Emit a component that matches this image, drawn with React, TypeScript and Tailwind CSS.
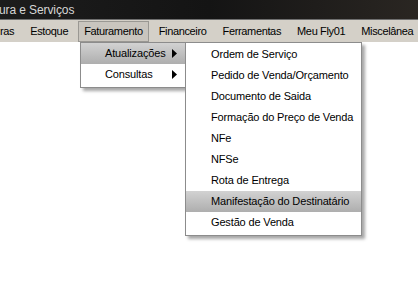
import { ReactNode } from 'react';

const font = { fontFamily: '"Liberation Sans", Arial, sans-serif' };

const topItems = ['ras', 'Estoque', 'Faturamento', 'Financeiro', 'Ferramentas', 'Meu Fly01', 'Miscelânea'];

const subItems = [
  'Ordem de Serviço',
  'Pedido de Venda/Orçamento',
  'Documento de Saida',
  'Formação do Preço de Venda',
  'NFe',
  'NFSe',
  'Rota de Entrega',
  'Manifestação do Destinatário',
  'Gestão de Venda',
];

function Arrow() {
  return (
    <svg width="5" height="9" viewBox="0 0 5 9" className="shrink-0">
      <path d="M0 0 L5 4.5 L0 9 Z" fill="#000" />
    </svg>
  );
}

function Row({ active, children }: { active?: boolean; children: ReactNode }) {
  return (
    <div
      className={`h-[21px] flex items-center whitespace-nowrap ${
        active ? 'bg-gradient-to-b from-[#d2d2d2] to-[#aeaeae]' : ''
      }`}
    >
      {children}
    </div>
  );
}

export default function App() {
  return (
    <div
      className="w-[418px] h-[285px] bg-white relative overflow-hidden text-[11px] tracking-[-0.15px] text-black"
      style={font}
    >
      {/* Title bar */}
      <div className="h-[19px] bg-gradient-to-r from-[#1c1c1c] via-[#141414] to-[#2a2622] flex items-center whitespace-nowrap">
        <span className="text-[12px] tracking-[-0.1px] text-[#d6d6d6] -ml-[1px]">ura e Serviços</span>
      </div>

      {/* Menu bar */}
      <div className="h-[23px] bg-[#d4d0c8] border-t border-[#6e6e6e] flex items-center whitespace-nowrap -ml-[8px] tracking-[-0.35px]">
        {topItems.map((item) => (
          <div
            key={item}
            className={`h-[21px] flex items-center shrink-0 ${
              item === 'Faturamento' ? 'mx-[2px] px-[5px] bg-[#c9c5be] border border-[#9a9893]' : 'px-[8px]'
            }`}
          >
            {item}
          </div>
        ))}
      </div>

      {/* First dropdown */}
      <div className="absolute left-[80px] top-[42px] w-[106px] bg-white border border-[#8c8c8c] shadow-[3px_3px_3px_rgba(0,0,0,0.35)] pb-[2px]">
        <Row active>
          <span className="ml-[24px] w-[67px]">Atualizações</span>
          <Arrow />
        </Row>
        <Row>
          <span className="ml-[24px] w-[67px]">Consultas</span>
          <Arrow />
        </Row>
      </div>

      {/* Second dropdown */}
      <div className="absolute left-[185px] top-[42px] w-[177px] bg-white border border-[#8c8c8c] shadow-[3px_3px_3px_rgba(0,0,0,0.35)] pt-[1px] pb-[2px]">
        {subItems.map((item) => (
          <Row key={item} active={item === 'Manifestação do Destinatário'}>
            <span className="ml-[25px]">{item}</span>
          </Row>
        ))}
      </div>
    </div>
  );
}
